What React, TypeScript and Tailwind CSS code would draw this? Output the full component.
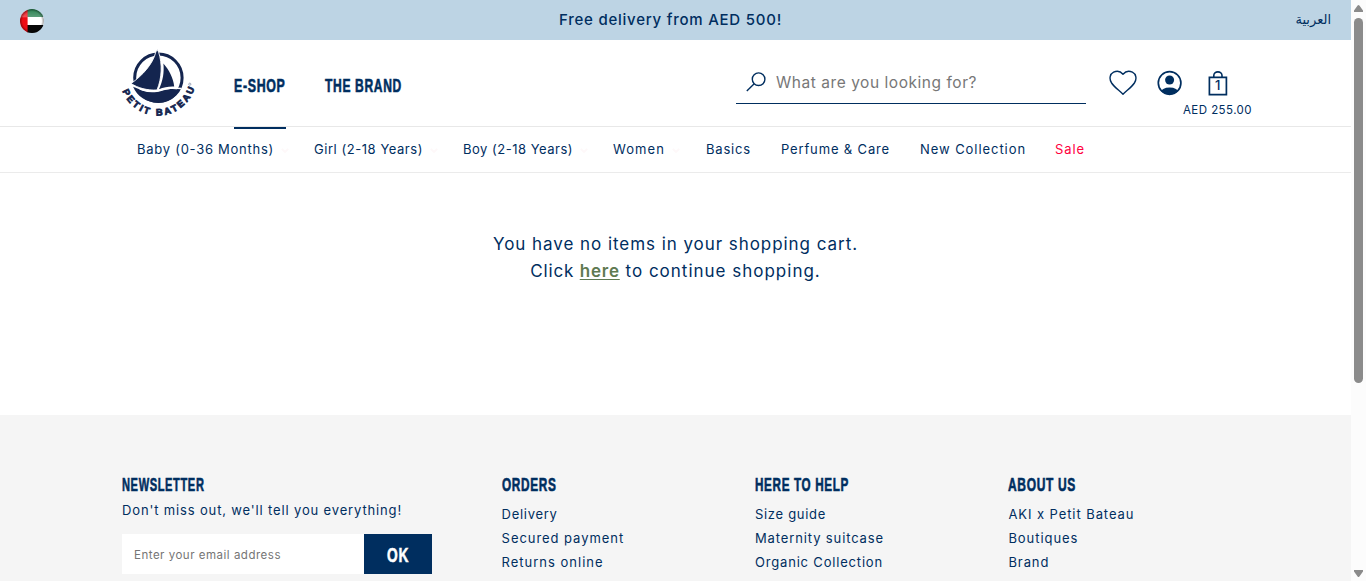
import { useLayoutEffect, useRef, type ReactNode } from 'react';

type FitProps = { w: number; children: ReactNode; className?: string };

/** Spreads the letters of a text so that it is exactly `w` pixels wide. */
function Tracked({ w, children, className = '' }: FitProps) {
  const ref = useRef<HTMLSpanElement>(null);
  useLayoutEffect(() => {
    const el = ref.current;
    if (!el) return;
    el.style.letterSpacing = '0px';
    const n = (el.textContent || '').length;
    el.style.letterSpacing = `${(w - el.getBoundingClientRect().width) / n}px`;
  }, [w]);
  return (
    <span ref={ref} className={`inline-block whitespace-pre ${className}`}>
      {children}
    </span>
  );
}

/** Condensed display lettering, narrowed to `w` pixels. */
function Condensed({ w, children, className = '' }: FitProps) {
  const ref = useRef<HTMLSpanElement>(null);
  useLayoutEffect(() => {
    const el = ref.current;
    if (!el) return;
    el.style.transform = 'none';
    el.style.transform = `scaleX(${w / el.getBoundingClientRect().width})`;
  }, [w]);
  return (
    <span className="block" style={{ width: w }}>
      <span
        ref={ref}
        className={`inline-block origin-left whitespace-pre font-['Liberation_Sans_Narrow','Liberation_Sans',sans-serif] font-bold tracking-[1px] [-webkit-text-stroke:0.6px_currentColor] ${className}`}
      >
        {children}
      </span>
    </span>
  );
}

function Flag() {
  return (
    <svg width="24" height="24" viewBox="0 0 24 24">
      <defs>
        <clipPath id="disc"><circle cx="12" cy="12" r="12" /></clipPath>
        <linearGradient id="gloss" x1="0" y1="0" x2="0" y2="1">
          <stop offset="0" stopColor="#fff" stopOpacity="0.05" />
          <stop offset="0.34" stopColor="#fff" stopOpacity="0.28" />
          <stop offset="0.36" stopColor="#fff" stopOpacity="0" />
        </linearGradient>
        <radialGradient id="rim">
          <stop offset="0.78" stopColor="#000" stopOpacity="0" />
          <stop offset="1" stopColor="#000" stopOpacity="0.4" />
        </radialGradient>
      </defs>
      <g clipPath="url(#disc)">
        <path fill="#1f7a48" d="M7 0h17v8H7z" />
        <path fill="#fff" d="M7 8h17v8H7z" />
        <path fill="#080808" d="M7 16h17v8H7z" />
        <path fill="#ef0b14" d="M0 0h7.6v24H0z" />
        <path fill="url(#gloss)" d="M0 0h24v24H0z" />
        <circle cx="12" cy="12" r="12" fill="url(#rim)" />
      </g>
    </svg>
  );
}

function Logo() {
  return (
    <svg width="78" height="74" viewBox="120 46 78 74" fill="#14254f">
      <circle cx="158.4" cy="77.8" r="23.7" fill="none" stroke="#14254f" strokeWidth="3" />
      <path d="M131 83.5C142 76 153 64 155.8 52L157.2 49.6L158.6 52C162.5 64 162 78 157 90C147 90.5 138 88 131 83.5Z" stroke="#fff" strokeWidth="0.9" />
      <path d="M163.4 63.6C169 70 173.4 78 174.2 86.6C169 86.3 164 87.2 159 89.2C163 81 164.3 72 163.4 63.6Z" />
      <path d="M133 86.6C141 91.5 149 93.2 157 92C163 91 168 87.4 179.6 89.6C176 97.5 168 102.8 158.4 102.8C146.5 102.8 137 96.5 133 86.6Z" />
      <path d="M132.5 85.2C141 90.6 149 91.8 157 90.8C164 89.5 168 86.4 181 88.6" fill="none" stroke="#fff" strokeWidth="1.5" />
      <path id="arc" d="M122.4 91A38.2 38.2 0 0 0 194.2 89.5" fill="none" />
      <text fontFamily="Liberation Sans, sans-serif" fontWeight="700" fontSize="9.4" stroke="#14254f" strokeWidth="0.8">
        <textPath href="#arc" textLength="94" lengthAdjust="spacing">PETIT BATEAU</textPath>
      </text>
      <circle cx="189.8" cy="84.2" r="1.1" fill="none" stroke="#6b7794" strokeWidth="0.6" />
    </svg>
  );
}

function SearchIcon() {
  return (
    <svg width="20" height="20" viewBox="0 0 20 20" fill="none" stroke="#002e5f" strokeWidth="1.4">
      <circle cx="12.6" cy="7.2" r="6.3" />
      <path d="M8.2 11.7L.8 19" />
    </svg>
  );
}

function HeartIcon() {
  return (
    <svg width="28" height="26" viewBox="0 0 28 26" fill="none" stroke="#002e5f" strokeWidth="1.4" strokeLinejoin="round">
      <path d="M14 24.2C10.5 20.6 5.2 17 2.6 13C-.2 8.8 1 4 4.6 2.2C8 .6 11.6 1.4 14 4.2C16.4 1.4 20 .6 23.4 2.2C27 4 28.2 8.8 25.4 13C22.8 17 17.5 20.6 14 24.2Z" />
    </svg>
  );
}

function UserIcon() {
  return (
    <svg width="26" height="26" viewBox="0 0 26 26">
      <defs><clipPath id="face"><circle cx="12.6" cy="13" r="11.6" /></clipPath></defs>
      <circle cx="12.6" cy="13" r="11.3" fill="none" stroke="#002e5f" strokeWidth="1.7" />
      <circle cx="12.6" cy="10" r="4.5" fill="#002e5f" />
      <ellipse cx="12.6" cy="22.4" rx="9" ry="4.9" fill="#002e5f" clipPath="url(#face)" />
    </svg>
  );
}

function BagIcon() {
  return (
    <svg width="20" height="25" viewBox="0 0 20 25" fill="none" stroke="#002e5f">
      <path strokeWidth="1.7" d="M1.4 6.4h17v17.2h-17z" />
      <path strokeWidth="1.6" d="M5.8 6V4.4a4.1 3.5 0 0 1 8.2 0V6" />
      <text x="9.8" y="19.4" textAnchor="middle" fontFamily="Inter, sans-serif" fontSize="13" fontWeight="500" fill="#002e5f" stroke="none">1</text>
    </svg>
  );
}

const menu = [
  { label: 'Baby (0-36 Months)', w: 137, slot: 'w-[177px]', arrow: true },
  { label: 'Girl (2-18 Years)', w: 109, slot: 'w-[149px]', arrow: true },
  { label: 'Boy (2-18 Years)', w: 110, slot: 'w-[150px]', arrow: true },
  { label: 'Women', w: 52, slot: 'w-[93px]', arrow: true },
  { label: 'Basics', w: 45, slot: 'w-[75px]', arrow: false },
  { label: 'Perfume & Care', w: 109, slot: 'w-[139px]', arrow: false },
  { label: 'New Collection', w: 106, slot: 'w-[135px]', arrow: false },
];

const columns = [
  { title: 'ORDERS', w: 54.5, links: [['Delivery', 56], ['Secured payment', 122.5], ['Returns online', 102]] },
  { title: 'HERE TO HELP', w: 94, links: [['Size guide', 71], ['Maternity suitcase', 129], ['Organic Collection', 128]] },
  { title: 'ABOUT US', w: 68, links: [['AKI x Petit Bateau', 126], ['Boutiques', 70], ['Brand', 41]] },
] as { title: string; w: number; links: [string, number][] }[];

export default function App() {
  return (
    <div className="flex h-[581px] w-[1366px] overflow-hidden bg-white font-['Inter',sans-serif] text-[#002e5f]">
      <div className="flex w-[1351px] flex-col">
        <div className="flex h-10 shrink-0 items-center justify-between bg-[#bdd4e4] pl-5 pr-5">
          <div className="w-[539px] pt-0.5"><Flag /></div>
          <Tracked w={223} className="text-[15px] leading-5 font-medium">Free delivery from AED 500!</Tracked>
          <div className="flex flex-1 justify-end">
            <span dir="rtl" lang="ar" className="pb-px font-['Liberation_Serif','DejaVu_Sans',serif] text-[13px] leading-5">العربية</span>
          </div>
        </div>

        <header className="flex h-[87px] shrink-0 border-b border-[#e8e8e8] pl-[120px]">
          <div className="w-[114px] pt-1.5"><Logo /></div>
          <div className="flex w-[502px] gap-[39px]">
            <div className="-mb-[3px] border-b-2 border-[#002e5f] pt-[34px]">
              <Condensed w={51.5} className="text-[18.5px] leading-6">E-SHOP</Condensed>
            </div>
            <div className="pt-[34px]">
              <Condensed w={77} className="text-[18.5px] leading-6">THE BRAND</Condensed>
            </div>
          </div>
          <div className="flex h-16 w-[350px] border-b border-[#002e5f] pl-[10px] pt-8">
            <SearchIcon />
            <Tracked w={201} className="ml-[10px] text-[15.5px] leading-[22px] text-[#777]">What are you looking for?</Tracked>
          </div>
          <div className="ml-[23px] pt-[30px]"><HeartIcon /></div>
          <div className="ml-[20px] pt-[30px]"><UserIcon /></div>
          <div className="flex w-[69px] flex-col items-center pt-[31px]">
            <BagIcon />
            <Tracked w={69} className="mt-[6px] text-[11.5px] leading-4">AED 255.00</Tracked>
          </div>
        </header>

        <nav className="flex h-[46px] shrink-0 border-b border-[#ebebeb] pl-[137px] pt-[12px] text-[13px] leading-5">
          {menu.map((item) => (
            <div key={item.label} className={`flex shrink-0 ${item.slot}`}>
              <Tracked w={item.w}>{item.label}</Tracked>
              {item.arrow && (
                <svg className="ml-[7px] mt-[9px]" width="8" height="5" viewBox="0 0 8 5" fill="none" stroke="#fef8f9" strokeWidth="1.8">
                  <path d="M.8.8L4 4L7.2.8" />
                </svg>
              )}
            </div>
          ))}
          <Tracked w={30} className="text-[#ff0040]">Sale</Tracked>
        </nav>

        <main className="flex h-[242px] shrink-0 flex-col items-center pt-[58px] text-[17px] leading-[27px]">
          <Tracked w={365}>You have no items in your shopping cart.</Tracked>
          <div className="flex">
            <Tracked w={49.5}>Click </Tracked>
            <a href="#" className="text-[#5f7a52]">
              <Tracked w={40} className="font-semibold underline decoration-1 underline-offset-2">here</Tracked>
            </a>
            <Tracked w={201}> to continue shopping.</Tracked>
          </div>
        </main>

        <footer className="flex flex-1 bg-[#f5f5f5] pl-[122px] pt-[58px]">
          <section className="w-[379.6px]">
            <Condensed w={82.5} className="text-[18px] leading-6">NEWSLETTER</Condensed>
            <Tracked w={280} className="mt-[3px] text-[13px] leading-5">Don't miss out, we'll tell you everything!</Tracked>
            <form className="mt-[13px] flex h-10 w-[310px]">
              <div className="w-[242px] bg-white pl-3 pt-[7px]">
                <Tracked w={147} className="text-[11.5px] leading-5 text-[#757575]">Enter your email address</Tracked>
              </div>
              <button type="button" className="flex w-[68px] items-center justify-center bg-[#002e5f] text-white">
                <Condensed w={22} className="mt-0.5 text-[21px] leading-7">OK</Condensed>
              </button>
            </form>
          </section>
          {columns.map((col) => (
            <section key={col.title} className="w-[253.4px]">
              <Condensed w={col.w} className="text-[18px] leading-6">{col.title}</Condensed>
              <ul className="mt-[5px] text-[13px] leading-6">
                {col.links.map(([label, w]) => (
                  <li key={label} className="h-6"><Tracked w={w}>{label}</Tracked></li>
                ))}
              </ul>
            </section>
          ))}
        </footer>
      </div>

      <div className="flex w-[15px] flex-col items-center justify-between bg-[#fcfcfc]">
        <div className="flex flex-col items-center gap-[6px] pt-[5px]">
          <svg width="9" height="7" viewBox="0 0 9 7" fill="#8b8b8b"><path d="M4.5 0Q5 0 5.4.6L9 5.6V7H0V5.6L3.6.6Q4 0 4.5 0Z" /></svg>
          <div className="h-[365px] w-[9px] rounded-full bg-[#8b8b8b]" />
        </div>
        <svg className="mb-1" width="9" height="7" viewBox="0 0 9 7" fill="#8b8b8b"><path d="M4.5 7Q5 7 5.4 6.4L9 1.4V0H0V1.4L3.6 6.4Q4 7 4.5 7Z" /></svg>
      </div>
    </div>
  );
}
